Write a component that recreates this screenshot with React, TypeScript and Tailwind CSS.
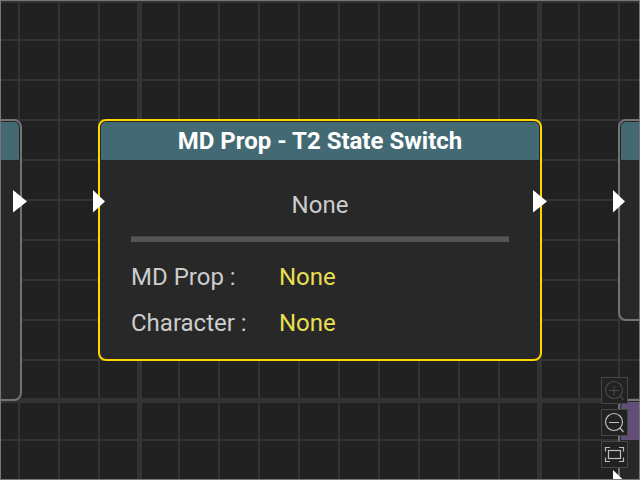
import React from "react";

type NodeFrameProps = {
  className: string;
  headerClass: string;
  title?: string;
  selected?: boolean;
  input?: boolean;
  output?: boolean;
  children?: React.ReactNode;
};

function Port({ className, wide }: { className: string; wide?: boolean }) {
  return (
    <svg
      className={`absolute top-[69px] ${className}`}
      width="14"
      height="23"
      viewBox="0 0 14 23"
      aria-hidden="true"
    >
      <path d={wide ? "M0 0L14 11.5L0 22.5Z" : "M0 0L12 11.5L0 22.5Z"} fill="#fff" />
    </svg>
  );
}

function NodeFrame({ className, headerClass, title, selected, input, output, children }: NodeFrameProps) {
  return (
    <section
      className={`absolute rounded-lg border-2 bg-[#282828] p-px ${
        selected ? "border-[#ffd500]" : "border-[#737373]"
      } ${className}`}
    >
      {title ? (
        <h2
          className={`h-[38px] rounded-t-[5px] text-center text-2xl leading-[38px] font-bold text-white ${headerClass}`}
        >
          {title}
        </h2>
      ) : (
        <div className={`h-[38px] rounded-t-[5px] ${headerClass}`} />
      )}
      {children}
      {input && <Port className="-left-[7px]" />}
      {output && <Port className="-right-[7px]" wide />}
    </section>
  );
}

function Property({ label, value }: { label: string; value: string }) {
  return (
    <div className="flex h-[46px] items-center">
      <dt className="w-[148px] text-[#cccccc]">{label}</dt>
      <dd className="text-[#e8df50]">{value}</dd>
    </div>
  );
}

function ToolButton({ label, disabled, children }: { label: string; disabled?: boolean; children: React.ReactNode }) {
  return (
    <button
      type="button"
      aria-label={label}
      disabled={disabled}
      className="flex size-[27px] items-center justify-center border border-[#464646] bg-[#222222] text-[#bdbdbd] disabled:text-[#484848]"
    >
      <svg width="25" height="25" viewBox="0 0 25 25" fill="none" stroke="currentColor" strokeWidth="1.2">
        {children}
      </svg>
    </button>
  );
}

export default function App() {
  return (
    <main className="relative h-screen w-full overflow-hidden bg-[#212121] font-['Roboto',sans-serif]">
      <svg className="absolute inset-0 size-full" aria-hidden="true">
        <defs>
          <pattern id="minor" x="18" y="39" width="40" height="40" patternUnits="userSpaceOnUse">
            <path d="M0 0H40V2H2V40H0Z" fill="#333" />
          </pattern>
          <pattern id="major" x="137" y="398" width="400" height="400" patternUnits="userSpaceOnUse">
            <path d="M0 0H400V5H5V400H0Z" fill="#333" />
          </pattern>
        </defs>
        <rect width="100%" height="100%" fill="url(#minor)" />
        <rect width="100%" height="100%" fill="url(#major)" />
      </svg>

      <NodeFrame className="top-[119px] -left-[422px] h-[282px] w-[444px]" headerClass="bg-[#436a73]" output />
      <NodeFrame className="top-[119px] left-[618px] h-[202px] w-[444px]" headerClass="bg-[#436a73]" input />
      <NodeFrame className="top-[399px] left-[618px] h-[242px] w-[444px]" headerClass="bg-[#624e76]" input />

      <NodeFrame
        className="top-[119px] left-[98px] w-[444px]"
        headerClass="bg-[#436a73]"
        title="MD Prop - T2 State Switch"
        selected
        input
        output
      >
        <div className="px-[30px] pt-[22px] pb-3 text-2xl">
          <p className="h-[46px] text-center leading-[46px] text-[#cccccc]">None</p>
          <hr className="mt-2 mb-3 h-[6px] border-0 border-t border-[#464646] bg-[#555555]" />
          <dl>
            <Property label="MD Prop :" value="None" />
            <Property label="Character :" value="None" />
          </dl>
        </div>
      </NodeFrame>

      <div className="absolute right-3 bottom-3 flex flex-col gap-[5px]">
        <ToolButton label="Zoom in" disabled>
          <circle cx="12" cy="12" r="8.5" />
          <path d="M7 12.5H17M12 7.5V17.5M18 18L21.5 22" />
        </ToolButton>
        <ToolButton label="Zoom out">
          <circle cx="12" cy="12" r="8.5" />
          <path d="M7 12.5H17M18 18L21.5 22" />
        </ToolButton>
        <ToolButton label="Fit to screen">
          <rect x="6.5" y="8.5" width="12" height="8" />
          <path d="M3.5 9.5V5.5H8M17 5.5H21.5V9.5M21.5 15.5V19.5H17M8 19.5H3.5V15.5" />
        </ToolButton>
      </div>
      <div className="pointer-events-none absolute inset-0 border border-[#74777e]" />
    </main>
  );
}
